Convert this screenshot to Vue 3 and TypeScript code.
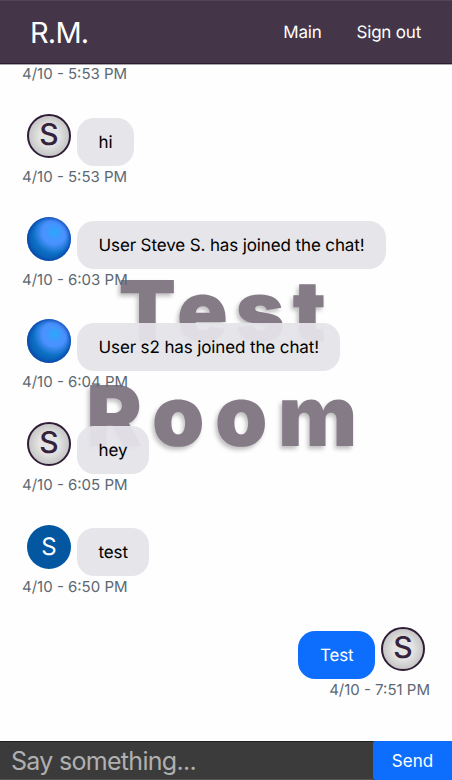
<script setup lang="ts">
interface Message {
  id: number
  text?: string
  time: string
  avatar?: 'ring' | 'orb' | 'flat'
  own?: boolean
}

const messages: Message[] = [
  { id: 1, time: '4/10 - 5:53 PM' },
  { id: 2, text: 'hi', time: '4/10 - 5:53 PM', avatar: 'ring' },
  { id: 3, text: 'User Steve S. has joined the chat!', time: '4/10 - 6:03 PM', avatar: 'orb' },
  { id: 4, text: 'User s2 has joined the chat!', time: '4/10 - 6:04 PM', avatar: 'orb' },
  { id: 5, text: 'hey', time: '4/10 - 6:05 PM', avatar: 'ring' },
  { id: 6, text: 'test', time: '4/10 - 6:50 PM', avatar: 'flat' },
  { id: 7, text: 'Test', time: '4/10 - 7:51 PM', avatar: 'ring', own: true },
]
</script>

<template>
  <div class="app">
    <header class="nav">
      <span class="brand">R.M.</span>
      <nav class="links">
        <a>Main</a>
        <a>Sign out</a>
      </nav>
    </header>
    <main class="chat">
      <div class="room"><span class="first">Test</span><span class="second">Room</span></div>
      <div class="list">
        <article v-for="m in messages" :key="m.id" class="message" :class="{ own: m.own }">
          <div v-if="m.text" class="line">
            <span class="avatar" :class="m.avatar"><span v-if="m.avatar !== 'orb'">S</span></span>
            <p class="bubble">{{ m.text }}</p>
          </div>
          <time class="time">{{ m.time }}</time>
        </article>
      </div>
    </main>
    <form class="composer" @submit.prevent>
      <input class="field" type="text" placeholder="Say something..." />
      <button class="send">Send</button>
    </form>
  </div>
</template>

<style>
body {
  margin: 0;
  background: #fefefe;
}
</style>

<style scoped>
.app {
  display: flex;
  flex-direction: column;
  height: 780px;
  overflow: hidden;
  font-family: Inter, "Liberation Sans", sans-serif;
  text-rendering: geometricPrecision;
  color: #000;
}
.nav {
  box-sizing: border-box;
  flex: none;
  height: 64px;
  display: flex;
  align-items: center;
  justify-content: space-between;
  padding: 1px 31px 0 30px;
  background: #443648;
  border-top: 1px solid #52455a;
  border-bottom: 1px solid #2c1c32;
  box-shadow: 0 1px 0 #aaa4ac;
  color: #fff;
  z-index: 1;
}
.brand {
  font-size: 29px;
  line-height: 34px;
  letter-spacing: -0.8px;
}
.links {
  display: flex;
  gap: 35px;
  font-size: 17px;
  line-height: 22px;
  letter-spacing: -0.2px;
}
.chat {
  flex: 1;
  min-height: 0;
  display: grid;
  overflow: hidden;
}
.room,
.list {
  grid-area: 1 / 1;
  min-height: 0;
}
.room {
  display: flex;
  flex-direction: column;
  align-items: center;
  padding-top: 195px;
  font-size: 84px;
  line-height: 105px;
  font-weight: 900;
  color: #857b87;
  text-shadow: -2px 3px 4px rgba(0, 0, 0, 0.25);
}
.first {
  letter-spacing: 7.5px;
}
.second {
  padding-left: 2px;
  letter-spacing: 10.5px;
}
.list {
  display: flex;
  flex-direction: column;
  justify-content: flex-end;
  padding-bottom: 7.5px;
  z-index: 1;
}
.message {
  box-sizing: border-box;
  flex: none;
  height: 102.6px;
  padding: 0 22px;
  display: flex;
  flex-direction: column;
  align-items: flex-start;
}
.message:first-child {
  height: 54.6px;
}
.line {
  display: flex;
  align-items: flex-start;
  gap: 6px;
  padding: 0 5px;
}
.avatar {
  box-sizing: border-box;
  width: 44px;
  height: 44px;
  margin-top: -3.7px;
  border-radius: 50%;
  display: flex;
  align-items: center;
  justify-content: center;
}
.ring {
  border: 2px solid #2f1d36;
  background: radial-gradient(circle, #e4e4e4 35%, #c2c2c2 75%);
  color: #35233c;
  font-size: 30px;
  font-weight: 500;
  line-height: 38px;
  padding-bottom: 3px;
}
.orb {
  background: radial-gradient(circle at 62% 35%, #29a8fb 0%, #4a92ff 24%, #4a92ff 30%, #0b6fc2 54%, #0a62b8 70%);
  box-shadow: inset 0 0 4px 1px #0c3da8;
}
.flat {
  background: #0257a0;
  color: #fff;
  font-size: 24px;
}
.bubble {
  box-sizing: border-box;
  height: 48px;
  margin: 0;
  padding: 0 21.5px;
  border-radius: 17px;
  background: rgba(229, 228, 233, 0.95);
  font-size: 17px;
  line-height: 50px;
  letter-spacing: -0.12px;
  white-space: nowrap;
}
.time {
  color: #5c6872;
  font-size: 15px;
  line-height: 22px;
}
.own {
  align-items: flex-end;
}
.own .line {
  flex-direction: row-reverse;
}
.own .bubble {
  background: #0d6efd;
  color: #fff;
}
.composer {
  flex: none;
  height: 39px;
  display: flex;
  background: #3b3b3b;
  z-index: 1;
}
.field {
  box-sizing: border-box;
  flex: 1;
  min-width: 0;
  padding: 0 11px;
  border: 0;
  border-top: 1px solid #222;
  border-bottom: 1px solid #555;
  background: #3b3b3b;
  font-family: inherit;
  font-size: 25px;
  letter-spacing: -0.7px;
  outline: 0;
}
.field::placeholder {
  color: #b0b0b0;
}
.send {
  flex: none;
  width: 79px;
  padding: 0;
  border: 0;
  border-radius: 3px 0 0 3px;
  background: #0d6efd;
  color: #fff;
  font-family: inherit;
  font-size: 17px;
}
</style>
